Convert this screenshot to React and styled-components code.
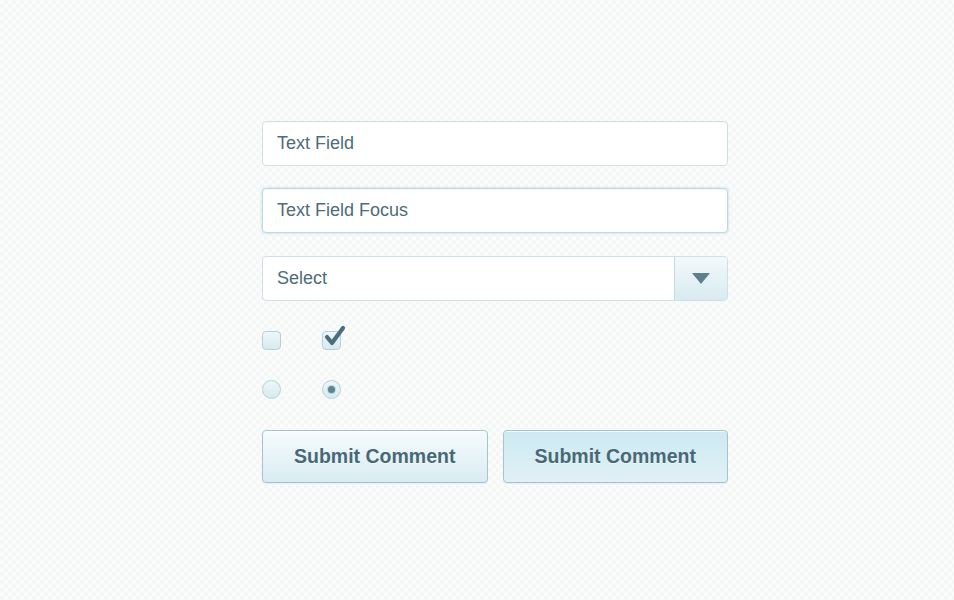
import React from "react";
import styled, { createGlobalStyle } from "styled-components";

const Global = createGlobalStyle`
  html, body { margin: 0; padding: 0; }
  body {
    width: 954px;
    height: 600px;
    overflow: hidden;
    font-family: "Liberation Sans", Arial, sans-serif;
    background-color: #fafbfb;
    background-image:
      linear-gradient(45deg, rgba(0,0,0,0.018) 25%, transparent 25%, transparent 75%, rgba(0,0,0,0.018) 75%),
      linear-gradient(45deg, rgba(0,0,0,0.018) 25%, transparent 25%, transparent 75%, rgba(0,0,0,0.018) 75%);
    background-size: 8px 8px;
    background-position: 0 0, 4px 4px;
  }
`;

const Page = styled.div`
  padding: 121px 0 0 262px;
`;

const Form = styled.div`
  width: 466px;
  display: flex;
  flex-direction: column;
`;

const Field = styled.div`
  box-sizing: border-box;
  height: 45px;
  margin-bottom: ${(p) => p.$mb || 0}px;
  background: #fff;
  border: 1px solid ${(p) => (p.$focus ? "#bcd8e2" : "#cfe1e7")};
  border-radius: 4px;
  box-shadow: ${(p) =>
    p.$focus
      ? "0 0 3px rgba(120,180,205,0.45), inset 0 1px 1px rgba(0,0,0,0.03)"
      : "inset 0 1px 1px rgba(0,0,0,0.03)"};
  display: flex;
  align-items: center;
  padding-left: 14px;
  font-size: 18px;
  color: #4e6c79;
`;

const Select = styled.div`
  box-sizing: border-box;
  height: 45px;
  margin-bottom: 30px;
  background: #fff;
  border: 1px solid #cfe1e7;
  border-radius: 4px;
  display: flex;
  align-items: stretch;
  overflow: hidden;
`;

const SelectLabel = styled.div`
  flex: 1;
  display: flex;
  align-items: center;
  padding-left: 14px;
  font-size: 18px;
  color: #4e6c79;
`;

const SelectArrow = styled.div`
  width: 52px;
  border-left: 1px solid #c3d9e1;
  background: linear-gradient(#f3f9fb, #d8ebf1);
  display: flex;
  align-items: center;
  justify-content: center;
`;

const ChoiceRow = styled.div`
  display: flex;
  gap: 41px;
  margin-bottom: ${(p) => p.$mb}px;
  height: 19px;
`;

const Box = styled.div`
  position: relative;
  box-sizing: border-box;
  width: 19px;
  height: 19px;
  border: 1px solid #b7d0d8;
  border-radius: ${(p) => (p.$round ? "50%" : "4px")};
  background: linear-gradient(#eef7fa, #d7eaf0);
  box-shadow: 0 1px 0 rgba(255,255,255,0.8);
  display: flex;
  align-items: center;
  justify-content: center;
`;

const Dot = styled.div`
  width: 7px;
  height: 7px;
  border-radius: 50%;
  background: #5c8494;
  box-shadow: 0 0 0 1px rgba(80,120,135,0.25);
`;

const Check = styled.svg`
  position: absolute;
  left: 1px;
  top: -7px;
`;

const Buttons = styled.div`
  display: flex;
  gap: 15px;
`;

const Button = styled.button`
  box-sizing: border-box;
  flex: 1;
  height: 53px;
  border: 1px solid #a7c4ce;
  border-radius: 4px;
  background: ${(p) =>
    p.$active
      ? "linear-gradient(#cde9f2, #e0f1f6)"
      : "linear-gradient(#f6fbfd, #d9ecf2)"};
  box-shadow: inset 0 1px 0 rgba(255,255,255,0.7), 0 1px 1px rgba(0,0,0,0.06);
  font-family: "Liberation Sans", Arial, sans-serif;
  font-weight: bold;
  font-size: 19.5px;
  color: #486876;
  text-shadow: 0 1px 0 rgba(255,255,255,0.6);
  padding: 0;
  cursor: pointer;
`;

export default function App() {
  return (
    <>
      <Global />
      <Page>
        <Form>
          <Field $mb={22}>Text Field</Field>
          <Field $focus $mb={23}>Text Field Focus</Field>
          <Select>
            <SelectLabel>Select</SelectLabel>
            <SelectArrow>
              <svg width="18" height="12" viewBox="0 0 18 12">
                <path d="M0 0 H18 L9 11 Z" fill="#5f7f8c" />
              </svg>
            </SelectArrow>
          </Select>
          <ChoiceRow $mb={30}>
            <Box />
            <Box>
              <Check width="22" height="23" viewBox="0 0 22 23">
                <path
                  d="M3 12 L8 18 L19 3"
                  fill="none"
                  stroke="#4c6e7c"
                  strokeWidth="4.2"
                  strokeLinecap="round"
                  strokeLinejoin="round"
                />
              </Check>
            </Box>
          </ChoiceRow>
          <ChoiceRow $mb={31}>
            <Box $round />
            <Box $round>
              <Dot />
            </Box>
          </ChoiceRow>
          <Buttons>
            <Button>Submit Comment</Button>
            <Button $active>Submit Comment</Button>
          </Buttons>
        </Form>
      </Page>
    </>
  );
}
